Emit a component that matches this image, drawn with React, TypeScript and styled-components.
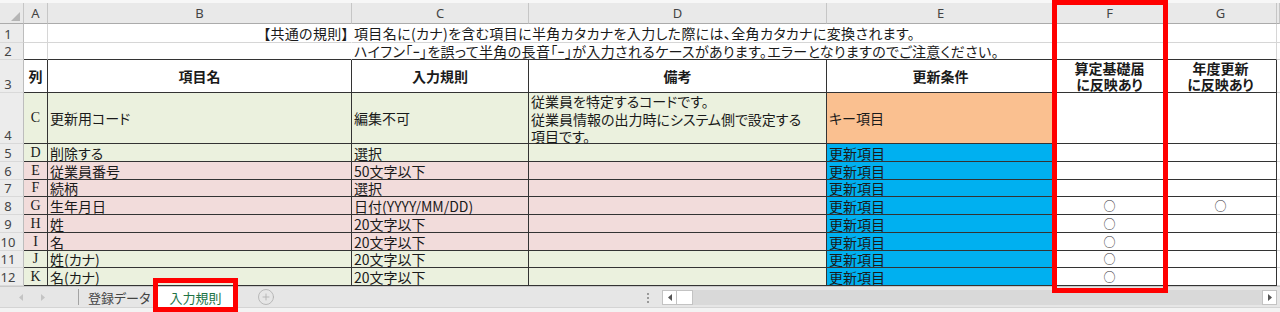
import React from 'react'
import styled, { createGlobalStyle } from 'styled-components'
import { CirclePlus } from 'lucide-react'

const RULE = '#333333'
const GRID = '#d6d6d6'
const HEAD_BG = '#e9e9e9'
const HEAD_LINE = '#c6c6c6'

const GREEN = '#ebf1de'
const PINK = '#f2dcdb'
const ORANGE = '#fac090'
const BLUE = '#00b0f0'

interface DataRow {
  n: number
  col: string
  name: string
  rule: string
  note?: string[]
  cond: string
  bg: string
  condBg: string
  santei?: boolean
  nendo?: boolean
}

const rows: DataRow[] = [
  {
    n: 4, col: 'C', name: '更新用コード', rule: '編集不可',
    note: ['従業員を特定するコードです。', '従業員情報の出力時にシステム側で設定する', '項目です。'],
    cond: 'キー項目', bg: GREEN, condBg: ORANGE,
  },
  { n: 5, col: 'D', name: '削除する', rule: '選択', cond: '更新項目', bg: GREEN, condBg: BLUE },
  { n: 6, col: 'E', name: '従業員番号', rule: '50文字以下', cond: '更新項目', bg: PINK, condBg: BLUE },
  { n: 7, col: 'F', name: '続柄', rule: '選択', cond: '更新項目', bg: PINK, condBg: BLUE },
  { n: 8, col: 'G', name: '生年月日', rule: '日付(YYYY/MM/DD)', cond: '更新項目', bg: PINK, condBg: BLUE, santei: true, nendo: true },
  { n: 9, col: 'H', name: '姓', rule: '20文字以下', cond: '更新項目', bg: PINK, condBg: BLUE, santei: true },
  { n: 10, col: 'I', name: '名', rule: '20文字以下', cond: '更新項目', bg: PINK, condBg: BLUE, santei: true },
  { n: 11, col: 'J', name: '姓(カナ)', rule: '20文字以下', cond: '更新項目', bg: GREEN, condBg: BLUE, santei: true },
  { n: 12, col: 'K', name: '名(カナ)', rule: '20文字以下', cond: '更新項目', bg: GREEN, condBg: BLUE, santei: true },
]

const GlobalStyle = createGlobalStyle`
  html, body { margin: 0; padding: 0; background: #fff; }
  body {
    font-family: "Noto Sans CJK JP", "Noto Sans", sans-serif;
    font-feature-settings: "palt";
    color: #1a1a1a;
  }
  * { box-sizing: border-box; }
`

const Page = styled.div`
  position: relative;
  width: 1280px;
  height: 312px;
  overflow: hidden;
  display: flex;
  flex-direction: column;
`

const TopStrip = styled.div`
  height: 3px;
  background: #f7f7f7;
`

const Sheet = styled.div`
  display: grid;
  grid-template-columns: 24px 24px 304px 177px 298px 228px 110px 112px 3px;
  grid-template-rows: 21px 19px 17px 33px 51px repeat(8, 17.75px);
`

const Corner = styled.div`
  background: ${HEAD_BG};
  border-right: 1px solid ${HEAD_LINE};
  border-bottom: 1px solid #ababab;
  display: flex;
  align-items: flex-end;
  justify-content: flex-end;
  padding: 0 3px 2px 0;
`

const ColHead = styled.div`
  background: ${HEAD_BG};
  border-right: 1px solid ${HEAD_LINE};
  border-bottom: 1px solid #ababab;
  display: flex;
  align-items: flex-end;
  justify-content: center;
  padding-bottom: 1px;
  font: 13px/17px "Noto Sans", sans-serif;
  color: #444;
`

const RowHead = styled.div`
  background: #ececec;
  border-right: 1px solid #bdbdbd;
  border-bottom: 1px solid #d9d9d9;
  display: flex;
  align-items: flex-end;
  justify-content: center;
  padding-right: 7px;
  font: 13px/16px "Noto Sans", sans-serif;
  color: #444;
`

const Cell = styled.div<{
  $bg?: string
  $align?: string
  $valign?: string
  $right?: string
  $bottom?: string
  $span?: number
}>`
  display: flex;
  justify-content: ${p => p.$align ?? 'flex-start'};
  align-items: ${p => p.$valign ?? 'flex-end'};
  grid-column: span ${p => p.$span ?? 1};
  background: ${p => p.$bg ?? '#fff'};
  border-right: 1px solid ${p => p.$right ?? GRID};
  border-bottom: 1px solid ${p => p.$bottom ?? GRID};
  padding: 0 2px;
  font-size: 14px;
  line-height: 16px;
  white-space: nowrap;
  min-width: 0;
`

const NoticeCell = styled(Cell)`
  align-items: center;
  line-height: 15px;
  letter-spacing: 0.35px;
`

const HeadCell = styled(Cell)`
  font-weight: 700;
  text-align: center;
  white-space: pre-line;
  line-height: 16px;
`

const ColLetter = styled(Cell)`
  font-family: "Liberation Serif", "DejaVu Serif", serif;
  font-size: 14px;
`

const Memo = styled(Cell)`
  flex-direction: column;
  line-height: 17.5px;
`

const Mark = styled.span`
  font-size: 12px;
  color: #333;
`

const TabBar = styled.div`
  height: 21px;
  background: #e6e6e6;
  border-top: 1px solid #c9c9c9;
  display: flex;
  align-items: center;
`

const BottomStrip = styled.div`
  flex: 1;
  background: #f3f3f3;
  border-top: 1px solid #d4d4d4;
`

const Nav = styled.div`
  width: 78px;
  display: flex;
  align-items: center;
  gap: 18px;
  padding-left: 19px;
`

const Divider = styled.div`
  width: 1px;
  height: 16px;
  background: #a3a3a3;
`

const SheetTab = styled.div<{ $active?: boolean }>`
  width: ${p => (p.$active ? '75px' : '79px')};
  height: ${p => (p.$active ? '21px' : '20px')};
  display: flex;
  align-items: center;
  justify-content: ${p => (p.$active ? 'center' : 'flex-start')};
  padding-left: ${p => (p.$active ? '0' : '9px')};
  background: ${p => (p.$active ? '#fff' : 'transparent')};
  color: ${p => (p.$active ? '#217346' : '#444')};
  font-size: 13px;
  font-weight: 400;
  white-space: nowrap;
`

const AddTab = styled.div`
  margin-left: 24px;
  display: flex;
  color: #b3b3b3;
`

const Spacer = styled.div`
  flex: 1;
`

const Grip = styled.div`
  width: 2px;
  height: 11px;
  margin-right: 13px;
  background: radial-gradient(circle, #9a9a9a 1px, transparent 1.2px) 0 0 / 2px 4px repeat-y;
`

const Scroll = styled.div`
  width: 615px;
  height: 15px;
  margin-right: 3px;
  display: flex;
  background: #d9d9d9;
`

const ScrollButton = styled.div`
  width: 15px;
  height: 15px;
  background: #fff;
  border: 1px solid #c3c3c3;
  display: flex;
  align-items: center;
  justify-content: center;
`

const Thumb = styled.div`
  width: 16px;
  background: #fff;
  border: 1px solid #c3c3c3;
  border-left: none;
`

const Track = styled.div`
  flex: 1;
`

const ColumnCallout = styled.div`
  position: absolute;
  left: 1052px;
  top: 0;
  width: 116px;
  height: 293px;
  border: 5px solid #ff0000;
  pointer-events: none;
`

const TabCallout = styled.div`
  position: absolute;
  left: 153px;
  top: 278px;
  width: 85px;
  height: 34px;
  border: 5px solid #ff0000;
  pointer-events: none;
`

const Arrow: React.FC<{ dir: 'left' | 'right'; color: string }> = ({ dir, color }) => (
  <svg width="4" height="7" viewBox="0 0 4 7">
    <path d={dir === 'left' ? 'M4 0 L0 3.5 L4 7 Z' : 'M0 0 L4 3.5 L0 7 Z'} fill={color} />
  </svg>
)

const letters = ['A', 'B', 'C', 'D', 'E', 'F', 'G']

const App: React.FC = () => {
  return (
    <Page>
      <GlobalStyle />
      <TopStrip />
      <Sheet>
        <Corner>
          <svg width="9" height="9" viewBox="0 0 9 9">
            <path d="M9 0 L9 9 L0 9 Z" fill="#b5b5b5" />
          </svg>
        </Corner>
        {letters.map(l => (
          <ColHead key={l}>{l}</ColHead>
        ))}
        <ColHead />

        {/* row 1 */}
        <RowHead>1</RowHead>
        <Cell />
        <NoticeCell $align="flex-end" $right="transparent">【共通の規則】</NoticeCell>
        <NoticeCell $span={3}>項目名に(カナ)を含む項目に半角カタカナを入力した際には、全角カタカナに変換されます。</NoticeCell>
        <Cell />
        <Cell />
        <Cell $right="transparent" />

        {/* row 2 */}
        <RowHead>2</RowHead>
        <Cell $bottom={RULE} />
        <Cell $bottom={RULE} $right="transparent" />
        <NoticeCell $span={3} $bottom={RULE}>ハイフン「ｰ」を誤って半角の長音「ｰ」が入力されるケースがあります。エラーとなりますのでご注意ください。</NoticeCell>
        <Cell $bottom={RULE} />
        <Cell $bottom={RULE} />
        <Cell $right="transparent" />

        {/* row 3 */}
        <RowHead>3</RowHead>
        <HeadCell $align="center" $valign="center" $right={RULE} $bottom={RULE}>列</HeadCell>
        <HeadCell $align="center" $valign="center" $right={RULE} $bottom={RULE}>項目名</HeadCell>
        <HeadCell $align="center" $valign="center" $right={RULE} $bottom={RULE}>入力規則</HeadCell>
        <HeadCell $align="center" $valign="center" $right={RULE} $bottom={RULE}>備考</HeadCell>
        <HeadCell $align="center" $valign="center" $right={RULE} $bottom={RULE}>更新条件</HeadCell>
        <HeadCell $align="center" $valign="center" $right={RULE} $bottom={RULE}>{'算定基礎届\nに反映あり'}</HeadCell>
        <HeadCell $align="center" $valign="center" $right={RULE} $bottom={RULE}>{'年度更新\nに反映あり'}</HeadCell>
        <Cell $right="transparent" />

        {rows.map(r => {
          const tall = !!r.note
          const v = tall ? 'center' : 'flex-end'
          return (
            <React.Fragment key={r.n}>
              <RowHead>{r.n}</RowHead>
              <ColLetter $bg={r.bg} $align="center" $valign={v} $right={RULE} $bottom={RULE}>{r.col}</ColLetter>
              <Cell $bg={r.bg} $valign={v} $right={RULE} $bottom={RULE}>{r.name}</Cell>
              <Cell $bg={r.bg} $valign={v} $right={RULE} $bottom={RULE}>{r.rule}</Cell>
              {r.note ? (
                <Memo $bg={r.bg} $valign="flex-start" $right={RULE} $bottom={RULE}>
                  {r.note.map(line => (
                    <span key={line}>{line}</span>
                  ))}
                </Memo>
              ) : (
                <Cell $bg={r.bg} $right={RULE} $bottom={RULE} />
              )}
              <Cell $bg={r.condBg} $valign={v} $right={RULE} $bottom={RULE}>{r.cond}</Cell>
              <Cell $align="center" $right={RULE} $bottom={RULE}>{r.santei && <Mark>○</Mark>}</Cell>
              <Cell $align="center" $right={RULE} $bottom={RULE}>{r.nendo && <Mark>○</Mark>}</Cell>
              <Cell $right="transparent" />
            </React.Fragment>
          )
        })}
      </Sheet>

      <TabBar>
        <Nav>
          <Arrow dir="left" color="#c4c4c4" />
          <Arrow dir="right" color="#c4c4c4" />
        </Nav>
        <Divider />
        <SheetTab>登録データ</SheetTab>
        <SheetTab $active>入力規則</SheetTab>
        <AddTab>
          <CirclePlus size={18} strokeWidth={1.2} />
        </AddTab>
        <Spacer />
        <Grip />
        <Scroll>
          <ScrollButton>
            <Arrow dir="left" color="#555" />
          </ScrollButton>
          <Thumb />
          <Track />
          <ScrollButton>
            <Arrow dir="right" color="#555" />
          </ScrollButton>
        </Scroll>
      </TabBar>
      <BottomStrip />

      <ColumnCallout />
      <TabCallout />
    </Page>
  )
}

export default App
